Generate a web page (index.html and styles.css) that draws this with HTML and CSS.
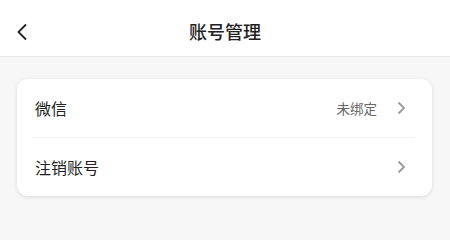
FILE: index.html
```html
<!DOCTYPE html>
<html lang="zh-CN">
<head>
<meta charset="utf-8">
<link rel="stylesheet" href="styles.css">
</head>
<body>
<header class="nav">
  <span class="back">
    <svg width="12" height="18" viewBox="0 0 12 18"><path d="M10 1.5 L2.5 9 L10 16.5" fill="none" stroke="#222" stroke-width="1.8"/></svg>
  </span>
  <h1 class="title">账号管理</h1>
</header>
<main class="content">
  <section class="card">
    <div class="row">
      <span class="label">微信</span>
      <span class="right">
        <span class="value">未绑定</span>
        <svg class="chev" width="9" height="14" viewBox="0 0 9 14"><path d="M1.5 1.5 L7 7 L1.5 12.5" fill="none" stroke="#999" stroke-width="1.8"/></svg>
      </span>
    </div>
    <div class="divider"></div>
    <div class="row">
      <span class="label">注销账号</span>
      <span class="right">
        <svg class="chev" width="9" height="14" viewBox="0 0 9 14"><path d="M1.5 1.5 L7 7 L1.5 12.5" fill="none" stroke="#999" stroke-width="1.8"/></svg>
      </span>
    </div>
  </section>
</main>
</body>
</html>
```
FILE: styles.css
```css
* { box-sizing: border-box; }
html, body {
  margin: 0;
  padding: 0;
  background: #f7f7f7;
  font-family: "Noto Sans CJK SC", "Noto Sans", sans-serif;
  width: 450px;
  height: 240px;
  overflow: hidden;
}
.nav {
  position: relative;
  height: 57px;
  background: #fff;
  border-bottom: 1px solid #e6e6e6;
  display: flex;
  align-items: center;
  justify-content: center;
}
.back {
  position: absolute;
  left: 16px;
  top: 23px;
  display: flex;
}
.title {
  margin: 0;
  font-size: 18px;
  font-weight: 500;
  color: #222;
  line-height: 1;
  padding-top: 6px;
}
.content {
  padding: 22px 18px 0 17px;
}
.card {
  background: #fff;
  border-radius: 11px;
  box-shadow: 0 1px 4px rgba(0,0,0,0.12);
  height: 117px;
}
.row {
  height: 58px;
  display: flex;
  align-items: center;
  justify-content: space-between;
  padding: 0 26px 0 18px;
}
.label {
  font-size: 16px;
  color: #222;
}
.right {
  display: flex;
  align-items: center;
  gap: 20px;
}
.value {
  font-size: 13.5px;
  color: #666;
}
.chev { display: block; }
.divider {
  height: 1px;
  background: #f0f0f0;
  margin: 0 17px 0 15px;
}
```
